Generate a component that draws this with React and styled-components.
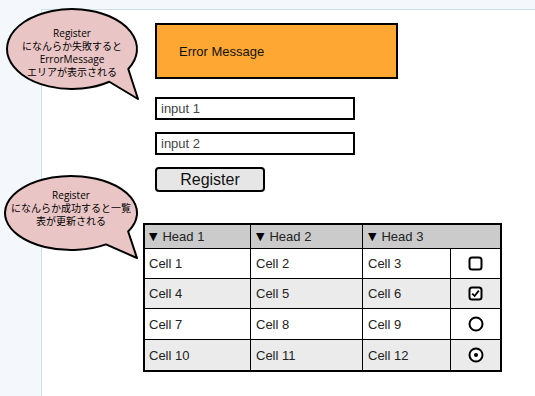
import React from 'react';
import styled, { createGlobalStyle } from 'styled-components';

const Global = createGlobalStyle`
  html, body, #root { margin: 0; padding: 0; height: 100%; }
  body {
    font-family: "Liberation Sans", Arial, sans-serif;
    background: #f4f8fc;
    overflow: hidden;
  }
`;

const Page = styled.div`
  position: relative;
  height: 100%;
  box-sizing: border-box;
  padding: 9px 0 0 41px;
  background: #f4f8fc;
  display: flex;
`;

const Canvas = styled.main`
  flex: 1;
  background: #ffffff;
  border-top: 1px solid #cfe0ee;
  border-left: 1px solid #cfe0ee;
  padding: 13px 0 0 101px;
  display: flex;
  flex-direction: column;
  align-items: flex-start;
`;

const Form = styled.section`
  display: flex;
  flex-direction: column;
  align-items: flex-start;
  padding-left: 12px;
`;

const ErrorBox = styled.div`
  box-sizing: border-box;
  width: 243px;
  height: 56px;
  border: 2px solid #000;
  background: #ffa733;
  display: flex;
  align-items: center;
  padding-left: 22px;
  font-size: 13px;
  color: #111;
  margin-bottom: 18px;
`;

const Input = styled.div`
  box-sizing: border-box;
  width: 200px;
  height: 23px;
  border: 2px solid #000;
  background: #fff;
  display: flex;
  align-items: center;
  padding-left: 4px;
  font-size: 13px;
  color: #444;
  margin-bottom: 12px;
`;

const Button = styled.button`
  box-sizing: border-box;
  width: 110px;
  height: 25px;
  border: 2px solid #000;
  border-radius: 4px;
  background: #e6e6e6;
  font-family: "Liberation Sans", Arial, sans-serif;
  font-size: 16px;
  color: #111;
  padding: 0;
  margin-bottom: 31px;
`;

const Table = styled.div`
  box-sizing: border-box;
  width: 359px;
  border: 2px solid #000;
  display: flex;
  flex-direction: column;
`;

const Row = styled.div`
  display: grid;
  grid-template-columns: ${p => (p.$head ? '105px 112px 1fr' : '105px 112px 88px 1fr')};
  height: ${p => p.$h}px;
  box-sizing: border-box;
  background: ${p => (p.$head ? '#cbcbcb' : p.$alt ? '#ebebeb' : '#ffffff')};
  border-top: ${p => (p.$head ? 'none' : '1px solid #000')};
`;

const Cell = styled.div`
  box-sizing: border-box;
  display: flex;
  align-items: center;
  justify-content: ${p => (p.$center ? 'center' : 'flex-start')};
  padding-left: ${p => (p.$center ? '0' : p.$first ? '4px' : '5px')};
  border-left: ${p => (p.$first ? 'none' : '1px solid #000')};
  font-size: 13px;
  color: #222;
`;

const Arrow = styled.span`
  font-family: "DejaVu Sans", sans-serif;
  font-size: 11px;
  margin-right: 5px;
  color: #000;
`;

const BubbleWrap = styled.div`
  position: absolute;
  left: ${p => p.$x}px;
  top: ${p => p.$y}px;
  width: ${p => p.$w}px;
  height: ${p => p.$h}px;
`;

const BubbleShape = styled.svg`
  position: absolute;
  left: 0;
  top: 0;
  overflow: visible;
`;

const BubbleText = styled.div`
  position: absolute;
  left: 0;
  top: ${p => p.$ty}px;
  width: ${p => p.$tw}px;
  text-align: center;
  font-family: "Open Sans", "Noto Sans CJK JP", sans-serif;
  font-size: 10px;
  line-height: 13.3px;
  color: #000;
  white-space: nowrap;
`;

function ellipsePoint(cx, cy, rx, ry, deg) {
  const a = (deg * Math.PI) / 180;
  return [cx + rx * Math.cos(a), cy + ry * Math.sin(a)];
}

function Bubble({ x, y, w, h, cx, cy, rx, ry, tip, a1, a2, ty, lines }) {
  const A = ellipsePoint(cx, cy, rx, ry, a2);
  const B = ellipsePoint(cx, cy, rx, ry, a1);
  const d = `M ${A[0]} ${A[1]} L ${tip[0]} ${tip[1]} L ${B[0]} ${B[1]} A ${rx} ${ry} 0 1 0 ${A[0]} ${A[1]} Z`;
  return (
    <BubbleWrap $x={x} $y={y} $w={w} $h={h}>
      <BubbleShape width={w} height={h} viewBox={`0 0 ${w} ${h}`}>
        <path d={d} fill="#e9c5c5" stroke="#000" strokeWidth="2" strokeLinejoin="round" />
      </BubbleShape>
      <BubbleText $ty={ty} $tw={cx * 2}>
        {lines.map((l, i) => (
          <div key={i}>{l}</div>
        ))}
      </BubbleText>
    </BubbleWrap>
  );
}

function CheckIcon({ checked }) {
  return (
    <svg width="15" height="15" viewBox="0 0 15 15">
      <rect x="1.5" y="1.5" width="12" height="12" rx="2.5" fill="#fff" stroke="#000" strokeWidth="2" />
      {checked && <path d="M4.2 7.6 L6.6 10 L10.8 4.6" fill="none" stroke="#000" strokeWidth="1.8" />}
    </svg>
  );
}

function RadioIcon({ selected }) {
  return (
    <svg width="16" height="16" viewBox="0 0 16 16">
      <circle cx="8" cy="8" r="6.5" fill="#fff" stroke="#000" strokeWidth="2" />
      {selected && <circle cx="8" cy="8" r="2" fill="#000" />}
    </svg>
  );
}

const rows = [
  { cells: ['Cell 1', 'Cell 2', 'Cell 3'], icon: <CheckIcon />, h: 30 },
  { cells: ['Cell 4', 'Cell 5', 'Cell 6'], icon: <CheckIcon checked />, alt: true, h: 30 },
  { cells: ['Cell 7', 'Cell 8', 'Cell 9'], icon: <RadioIcon />, h: 31 },
  { cells: ['Cell 10', 'Cell 11', 'Cell 12'], icon: <RadioIcon selected />, alt: true, h: 31 },
];

export default function App() {
  return (
    <>
      <Global />
      <Page>
        <Canvas>
          <Form>
            <ErrorBox>Error Message</ErrorBox>
            <Input>input 1</Input>
            <Input>input 2</Input>
            <Button>Register</Button>
          </Form>
          <Table>
            <Row $head $h={23}>
              <Cell $first><Arrow>▼</Arrow>Head 1</Cell>
              <Cell><Arrow>▼</Arrow>Head 2</Cell>
              <Cell><Arrow>▼</Arrow>Head 3</Cell>
            </Row>
            {rows.map((r, i) => (
              <Row key={i} $alt={r.alt} $h={r.h}>
                <Cell $first>{r.cells[0]}</Cell>
                <Cell>{r.cells[1]}</Cell>
                <Cell>{r.cells[2]}</Cell>
                <Cell $center>{r.icon}</Cell>
              </Row>
            ))}
          </Table>
        </Canvas>
        <Bubble
          x={0} y={0} w={145} h={105}
          cx={72} cy={49} rx={65} ry={40}
          tip={[138, 99]} a1={30} a2={55}
          ty={26.5}
          lines={['Register', 'になんらか失敗すると', 'ErrorMessage', 'エリアが表示される']}
        />
        <Bubble
          x={0} y={170} w={145} h={95}
          cx={71} cy={43} rx={66} ry={37}
          tip={[137, 88]} a1={30} a2={58}
          ty={18.5}
          lines={['Register', 'になんらか成功すると一覧', '表が更新される']}
        />
      </Page>
    </>
  );
}
